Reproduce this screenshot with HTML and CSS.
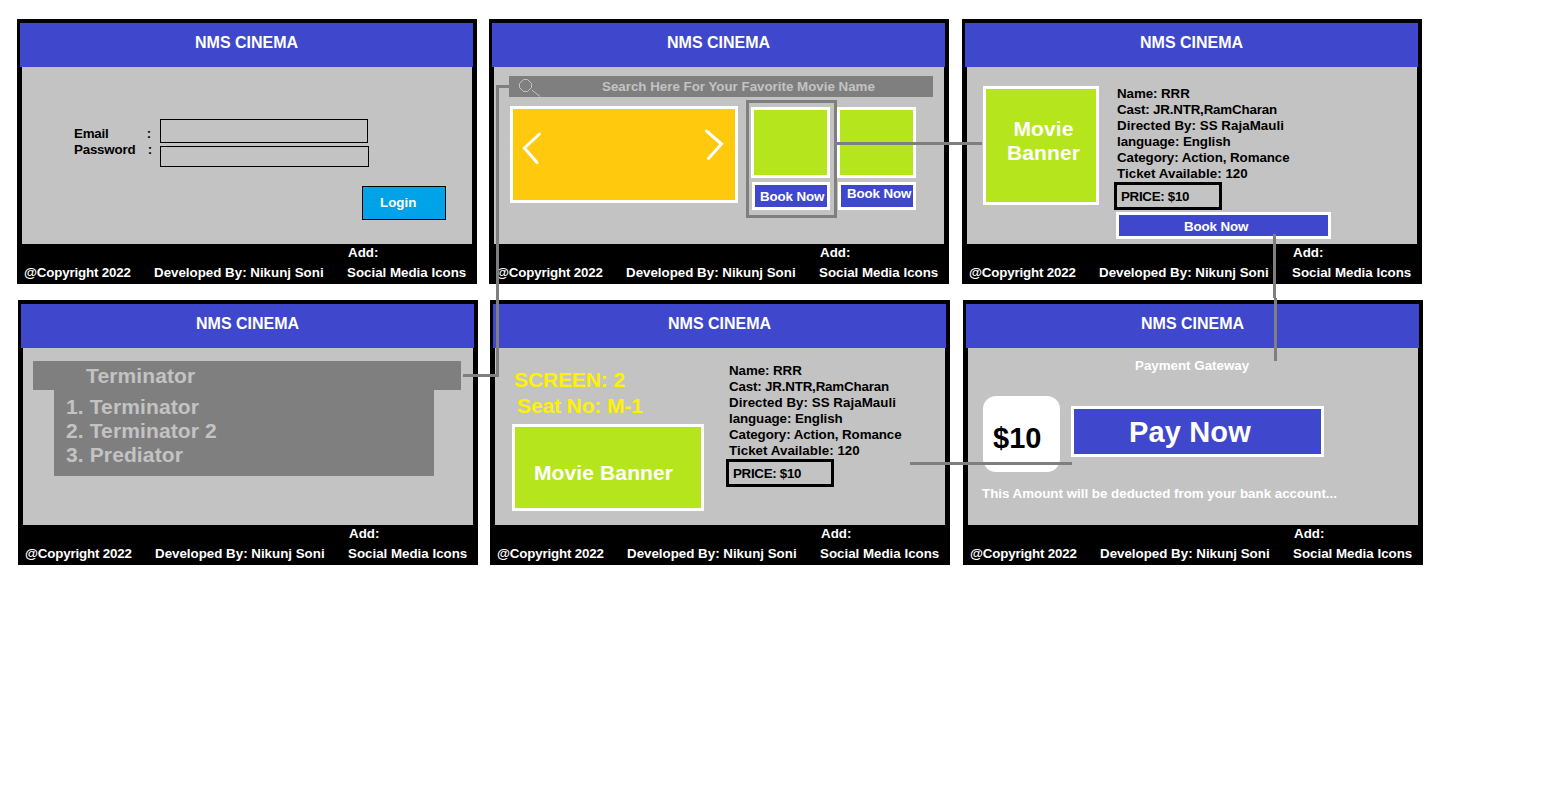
FILE: index.html
```html
<!DOCTYPE html>
<html lang="en">
<head>
<meta charset="utf-8">
<title>NMS CINEMA</title>
<link rel="stylesheet" href="styles.css">
</head>
<body>
<main class="board">
  <div class="row">
    <section class="screen">
      <header class="title">NMS CINEMA</header>
      <div class="body login">
        <div class="labels">
          <div class="label"><span>Email</span><span>:</span></div>
          <div class="label label-password"><span>Password</span><span>:</span></div>
        </div>
        <div class="fields">
          <div class="field field-email"></div>
          <div class="field field-password"></div>
          <div class="login-button">Login</div>
        </div>
      </div>
      <footer class="foot"><span class="add">Add:</span><span class="copy">@Copyright 2022</span><span>Developed By: Nikunj Soni</span><span>Social Media Icons</span></footer>
    </section>

    <section class="screen">
      <header class="title">NMS CINEMA</header>
      <div class="body home">
        <div class="search">
          <svg class="search-icon" width="26" height="21" viewBox="0 0 26 21"><path d="M7.500 3.500h4l4 4v4l-4 4h-4l-4-4v-4zM16 14l8 6.500"/></svg>
          <span>Search Here For Your Favorite Movie Name</span>
        </div>
        <div class="shelf">
          <div class="carousel">
            <svg width="222" height="91" viewBox="0 0 222 91"><path d="M26.500 25 11.500 39 24 53.500M193.500 22 208.500 35 195.500 49.500"/></svg>
          </div>
          <div class="pick picked"><div class="poster"></div><div class="book-small">Book Now</div></div>
          <div class="pick"><div class="poster"></div><div class="book-small book-raised">Book Now</div></div>
        </div>
      </div>
      <footer class="foot"><span class="add">Add:</span><span class="copy">@Copyright 2022</span><span>Developed By: Nikunj Soni</span><span>Social Media Icons</span></footer>
    </section>

    <section class="screen screen-last">
      <header class="title">NMS CINEMA</header>
      <div class="body movie">
        <div class="banner banner-square"><span>Movie</span><span>Banner</span></div>
        <div class="info">
          <ul class="details">
            <li>Name: RRR</li><li class="cast">Cast: JR.NTR,RamCharan</li><li class="director">Directed By: SS RajaMauli</li><li>language: English</li><li>Category: Action, Romance</li><li class="seats">Ticket Available: 120</li>
          </ul>
          <div class="price">PRICE: $10</div>
          <div class="book-wide">Book Now</div>
        </div>
      </div>
      <footer class="foot"><span class="add">Add:</span><span class="copy">@Copyright 2022</span><span>Developed By: Nikunj Soni</span><span>Social Media Icons</span></footer>
    </section>
  </div>

  <div class="row row-second">
    <section class="screen">
      <header class="title">NMS CINEMA</header>
      <div class="body results">
        <div class="query">Terminator</div>
        <ul class="matches"><li>1. Terminator</li><li>2. Terminator 2</li><li>3. Prediator</li></ul>
      </div>
      <footer class="foot"><span class="add">Add:</span><span class="copy">@Copyright 2022</span><span>Developed By: Nikunj Soni</span><span>Social Media Icons</span></footer>
    </section>

    <section class="screen">
      <header class="title">NMS CINEMA</header>
      <div class="body ticket">
        <div class="seat">
          <div class="seat-screen">SCREEN: 2</div>
          <div class="seat-number">Seat No: M-1</div>
          <div class="banner banner-wide">Movie Banner</div>
        </div>
        <div class="info info-ticket">
          <ul class="details">
            <li>Name: RRR</li><li class="cast">Cast: JR.NTR,RamCharan</li><li class="director">Directed By: SS RajaMauli</li><li>language: English</li><li>Category: Action, Romance</li><li class="seats">Ticket Available: 120</li>
          </ul>
          <div class="price">PRICE: $10</div>
        </div>
      </div>
      <footer class="foot"><span class="add">Add:</span><span class="copy">@Copyright 2022</span><span>Developed By: Nikunj Soni</span><span>Social Media Icons</span></footer>
    </section>

    <section class="screen screen-last">
      <header class="title">NMS CINEMA</header>
      <div class="body payment">
        <div class="gateway">Payment Gateway</div>
        <div class="pay">
          <div class="amount">$10</div>
          <div class="pay-button">Pay Now</div>
        </div>
        <div class="notice">This Amount will be deducted from your bank account...</div>
      </div>
      <footer class="foot"><span class="add">Add:</span><span class="copy">@Copyright 2022</span><span>Developed By: Nikunj Soni</span><span>Social Media Icons</span></footer>
    </section>
  </div>

  <svg class="links" width="1554" height="806" viewBox="0 0 1554 806">
    <path d="M509 86.500H497.500V375.500H463"/>
    <path d="M837 143.500H982"/>
    <path d="M1274.500 234V298M1275.500 298V361"/>
    <path d="M910 463.500H1072"/>
  </svg>
</main>
</body>
</html>
```
FILE: styles.css
```css
* { box-sizing: border-box; }
body {
  margin: 0;
  background: #fff;
  color: #000;
  font: bold 13.33px/16px "Liberation Sans", Arial, sans-serif;
  white-space: nowrap;
}
ul { list-style: none; margin: 0; padding: 0; }
.board { position: relative; height: 806px; padding-top: 19px; overflow: hidden; }
.row { display: flex; gap: 12px; padding-left: 17px; }
.row-second { padding-left: 18px; margin-top: 16px; }
.screen { flex: none; width: 460px; height: 265px; padding-top: 4px; background: #000; }
.screen-last { margin-left: 1px; }
.title {
  height: 44px; margin: 0 4px 0 3px; padding: 10px 0 0 175px;
  background: #3f48cc; color: #fff; font-size: 16px; line-height: 20px;
}
.body { height: 177px; margin: 0 5px; background: #c3c3c3; }
.foot {
  display: grid; grid-template-columns: 130px 193px 1fr; grid-template-rows: 20px 16px;
  padding: 1px 0 0 7px; color: #fff;
}
.add { grid-column: 3; padding-left: 1px; }
.copy { grid-column: 1; letter-spacing: -.17px; }

/* Login */
.login { display: flex; padding-left: 52px; }
.labels { width: 86px; padding-top: 59px; letter-spacing: -.2px; }
.label { display: flex; justify-content: space-between; width: 77px; }
.label-password { width: 78px; }
.fields { flex: 1; padding-top: 52px; }
.field { border: 1px solid #000; }
.field-email { width: 208px; height: 24px; }
.field-password { width: 209px; height: 21px; margin-top: 3px; }
.login-button {
  width: 84px; height: 34px; margin: 19px 0 0 202px; padding: 8px 0 0 17px;
  border: 1px solid #000; background: #00a2e8; color: #fff;
}

/* Home */
.home { padding: 9px 0 0 15px; }
.search { display: flex; width: 424px; height: 21px; background: #7f7f7f; color: #c3c3c3; line-height: 22px; }
.search-icon { margin: 0 60px 0 7px; fill: none; stroke: #c3c3c3; stroke-width: 1; }
.shelf { display: flex; align-items: flex-start; padding-top: 3px; }
.carousel { width: 228px; height: 97px; margin: 6px 8px 0 1px; border: 3px solid #fff; background: #ffc90e; }
.carousel svg { display: block; fill: none; stroke: #fff; stroke-width: 3; stroke-linecap: round; }
.pick { padding-top: 7px; }
.picked { width: 91px; height: 118px; padding: 4px 0 0 2px; border: 3px solid #7f7f7f; }
.poster { width: 79px; height: 71px; border: 3px solid #fff; background: #b5e61d; }
.book-small {
  width: 78px; height: 28px; margin: 4px 0 0 1px; padding: 4px 0 0 5px;
  border: 3px solid #fff; background: #3f48cc; color: #fff; letter-spacing: -.1px;
}
.book-raised { padding: 1px 0 0 6px; }

/* Movie details */
.movie { display: flex; padding-left: 16px; }
.banner { border: 3px solid #fff; background: #b5e61d; color: #fff; font-size: 21px; line-height: 24px; letter-spacing: .12px; }
.banner-square {
  display: flex; flex-direction: column; align-items: center;
  width: 116px; height: 119px; margin-top: 19px; padding: 28px 0 0 5px;
}
.info { margin-left: 15px; padding-top: 19px; }
.details { padding-left: 3px; letter-spacing: -.07px; }
.cast { letter-spacing: -.17px; }
.director, .seats { letter-spacing: .04px; }
.price { width: 108px; height: 28px; padding: 4px 0 0 4px; border: 3px solid #000; letter-spacing: -.3px; }
.book-wide {
  width: 215px; height: 27px; margin: 2px 0 0 2px; padding: 4px 0 0 65px;
  border: 3px solid #fff; background: #3f48cc; color: #fff; letter-spacing: -.1px;
}

/* Search results */
.results { padding: 13px 0 0 10px; color: #c3c3c3; font-size: 21px; line-height: 24px; letter-spacing: .12px; }
.query { width: 428px; height: 29px; padding: 3px 0 0 53px; background: #7f7f7f; }
.matches { width: 380px; height: 86px; margin-left: 21px; padding: 5px 0 0 12px; background: #7f7f7f; }
.results + .foot { letter-spacing: 0; }

/* Ticket */
.ticket { display: flex; padding-left: 17px; }
.seat { padding-top: 20px; font-size: 21px; line-height: 24px; color: #fff200; letter-spacing: -.12px; }
.seat-screen { padding-left: 2px; }
.seat-number { padding: 2px 0 0 5px; }
.banner-wide { width: 192px; height: 87px; margin-top: 6px; padding: 34px 0 0 19px; }
.info-ticket { margin-left: 22px; padding-top: 15px; }

/* Payment */
.payment { padding: 10px 0 0 14px; color: #fff; }
.gateway { padding-left: 153px; }
.pay { display: flex; align-items: flex-start; padding: 22px 0 0 1px; font-size: 29px; line-height: 34px; }
.amount {
  width: 77px; height: 76px; padding: 25px 0 0 10px; border-radius: 13px;
  background: #fff; color: #000;
}
.pay-button { width: 253px; height: 51px; margin: 10px 0 0 11px; padding: 6px 0 0 55px; border: 3px solid #fff; background: #3f48cc; letter-spacing: .15px; }
.notice { padding-top: 14px; }

/* Lines joining the screens */
.links { position: absolute; left: 0; top: 0; fill: none; stroke: #7f7f7f; stroke-width: 3; pointer-events: none; }
```
